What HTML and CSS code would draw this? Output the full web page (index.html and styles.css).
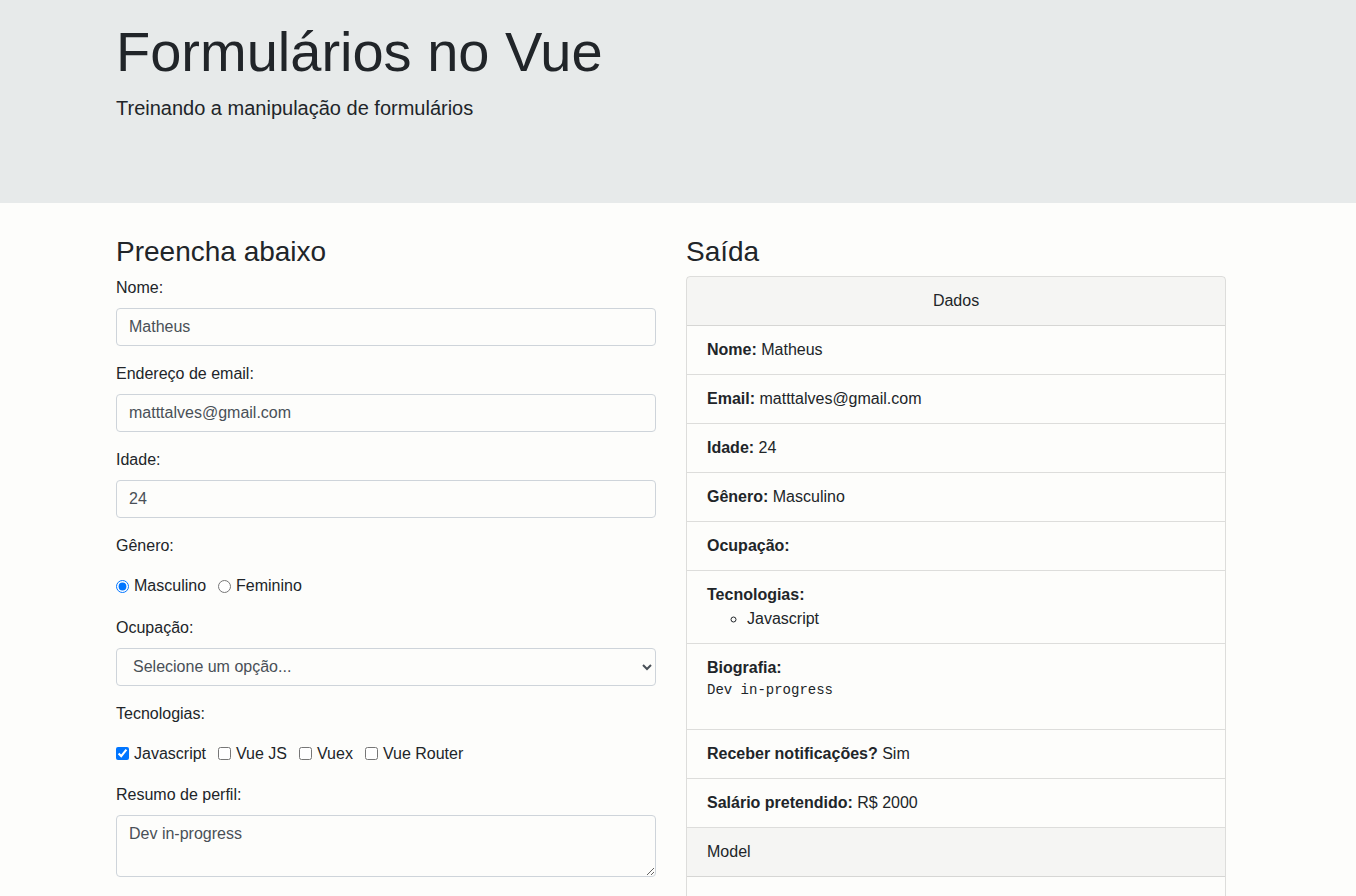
FILE: index.html
```html
<!DOCTYPE html>
<html lang="pt-BR">
<head>
<meta charset="utf-8">
<title>Formulários no Vue</title>
<link rel="stylesheet" href="styles.css">
</head>
<body>
<header class="jumbotron">
  <div class="container">
    <h1 class="display">Formulários no Vue</h1>
    <p class="lead">Treinando a manipulação de formulários</p>
  </div>
</header>
<main class="container">
  <div class="row">
    <section class="col">
      <h3 class="title">Preencha abaixo</h3>
      <form>
        <div class="form-group">
          <label class="field-label" for="nome">Nome:</label>
          <input class="form-control" id="nome" type="text" value="Matheus">
        </div>
        <div class="form-group">
          <label class="field-label" for="email">Endereço de email:</label>
          <input class="form-control" id="email" type="email" value="matttalves@gmail.com">
        </div>
        <div class="form-group">
          <label class="field-label" for="idade">Idade:</label>
          <input class="form-control" id="idade" type="number" value="24">
        </div>
        <div class="form-group">
          <label class="field-label">Gênero:</label>
          <div class="check-row">
            <label class="check-inline"><input class="check-input" type="radio" name="genero" checked>Masculino</label>
            <label class="check-inline"><input class="check-input" type="radio" name="genero">Feminino</label>
          </div>
        </div>
        <div class="form-group">
          <label class="field-label" for="ocupacao">Ocupação:</label>
          <select class="form-control select" id="ocupacao">
            <option>Selecione um opção...</option>
            <option>Desenvolvedor</option>
          </select>
        </div>
        <div class="form-group">
          <label class="field-label">Tecnologias:</label>
          <div class="check-row">
            <label class="check-inline"><input class="check-input" type="checkbox" checked>Javascript</label>
            <label class="check-inline"><input class="check-input" type="checkbox">Vue JS</label>
            <label class="check-inline"><input class="check-input" type="checkbox">Vuex</label>
            <label class="check-inline"><input class="check-input" type="checkbox">Vue Router</label>
          </div>
        </div>
        <div class="form-group">
          <label class="field-label" for="resumo">Resumo de perfil:</label>
          <textarea class="form-control textarea" id="resumo" rows="2">Dev in-progress</textarea>
        </div>
      </form>
    </section>
    <section class="col">
      <h3 class="title">Saída</h3>
      <div class="card">
        <div class="card-header center">Dados</div>
        <ul class="list-group">
          <li class="list-item"><strong>Nome:</strong> Matheus</li>
          <li class="list-item"><strong>Email:</strong> matttalves@gmail.com</li>
          <li class="list-item"><strong>Idade:</strong> 24</li>
          <li class="list-item"><strong>Gênero:</strong> Masculino</li>
          <li class="list-item"><strong>Ocupação:</strong> </li>
          <li class="list-item">
            <strong>Tecnologias:</strong>
            <ul class="tech-list">
              <li>Javascript</li>
            </ul>
          </li>
          <li class="list-item">
            <strong>Biografia:</strong>
            <pre class="bio">Dev in-progress</pre>
          </li>
          <li class="list-item"><strong>Receber notificações?</strong> Sim</li>
          <li class="list-item"><strong>Salário pretendido:</strong> R$ 2000</li>
        </ul>
        <div class="card-header">Model</div>
        <div class="card-body"></div>
      </div>
    </section>
  </div>
</main>
</body>
</html>
```
FILE: styles.css
```css
* {
  box-sizing: border-box;
}

html, body {
  margin: 0;
  padding: 0;
}

body {
  background: #fdfdfb;
  color: #212529;
  font-family: "Liberation Sans", Arial, sans-serif;
  font-size: 16px;
  line-height: 1.5;
}

.container {
  width: 1140px;
  padding: 0 15px;
  margin-left: 101px;
}

.jumbotron {
  background: #e7eaea;
  padding: 18px 0 64px;
  margin-bottom: 32px;
}

.display {
  font-size: 56px;
  font-weight: 300;
  line-height: 1.2;
  margin: 0 0 8px;
}

.lead {
  font-size: 20px;
  font-weight: 300;
  margin: 0 0 16px;
}

.row {
  display: flex;
  gap: 30px;
}

.col {
  flex: 1 1 0;
  min-width: 0;
}

.title {
  font-size: 28px;
  font-weight: 500;
  line-height: 33px;
  margin: 0 0 8px;
}

.form-group {
  margin-bottom: 16px;
}

.field-label {
  display: block;
  margin-bottom: 8px;
}

.form-control {
  display: block;
  width: 100%;
  height: 38px;
  padding: 6px 12px;
  font-family: inherit;
  font-size: 16px;
  line-height: 1.5;
  color: #495057;
  background: #fdfdfb;
  border: 1px solid #ced4da;
  border-radius: 4px;
}

.textarea {
  height: auto;
  resize: vertical;
}

.check-row {
  display: flex;
  padding: 8px 0 1.5px;
}

.check-inline {
  display: inline-flex;
  align-items: center;
  margin-right: 12px;
  line-height: 24px;
}

.check-input {
  margin: 0 5px 0 0;
  width: 13px;
  height: 13px;
}

.card {
  border: 1px solid rgba(0, 0, 0, 0.125);
  border-radius: 4px;
  overflow: hidden;
}

.card-header {
  padding: 12px 20px;
  background: rgba(0, 0, 0, 0.03);
  border-bottom: 1px solid rgba(0, 0, 0, 0.125);
}

.center {
  text-align: center;
}

.list-group {
  list-style: none;
  margin: 0;
  padding: 0;
}

.list-item {
  padding: 12px 20px;
  border-bottom: 1px solid rgba(0, 0, 0, 0.125);
}

strong {
  font-weight: bold;
}

.tech-list {
  list-style-type: circle;
  margin: 0;
  padding-left: 40px;
}

.bio {
  font-family: "Liberation Mono", "Courier New", monospace;
  font-size: 14px;
  line-height: 1.5;
  margin: 0 0 16px;
}

.card-body {
  padding: 20px;
  min-height: 120px;
}
```
